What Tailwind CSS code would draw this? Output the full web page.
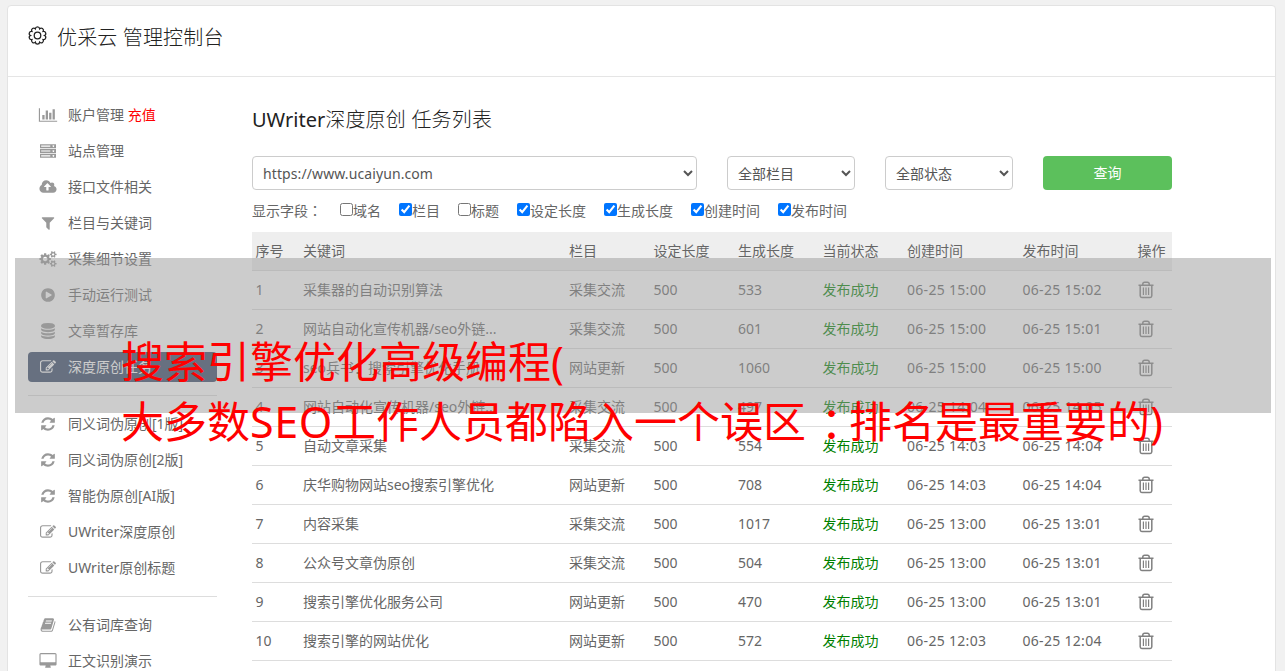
<!DOCTYPE html>
<html lang="zh-CN">
<head>
<meta charset="UTF-8">
<meta name="viewport" content="width=device-width, initial-scale=1.0">
<title>优采云 管理控制台</title>
<script src="https://cdn.jsdelivr.net/npm/@tailwindcss/browser@4"></script>
</head>
<body class="bg-[#f1f1f1] h-[671px] overflow-hidden font-['Noto_Sans','Noto_Sans_CJK_SC',sans-serif] text-sm text-[#666]">

<!-- icons -->
<svg class="hidden">
  <symbol id="chart" viewBox="0 0 2048 1792"><path d="M640 896v512h-256v-512h256zm384-512v1024h-256v-1024h256zm1024 1152v128h-2048v-1536h128v1408h1920zm-640-896v768h-256v-768h256zm384-384v1152h-256v-1152h256z"/></symbol>
  <symbol id="server" viewBox="0 0 1792 1792"><path fill-rule="evenodd" d="M0 128h1792v448h-1792zM128 288v128h1024v-128zM1500 256a96 96 0 1 0 1 0zM0 672h1792v448h-1792zM128 832v128h1024v-128zM1500 800a96 96 0 1 0 1 0zM0 1216h1792v448h-1792zM128 1376v128h1024v-128zM1500 1344a96 96 0 1 0 1 0z"/></symbol>
  <symbol id="cloud" viewBox="0 0 1920 1792"><path d="M1280 864q0-14-9-23l-352-352q-9-9-23-9t-23 9l-351 351q-10 12-10 24 0 14 9 23t23 9h224v352q0 13 9.5 22.5t22.5 9.5h192q13 0 22.5-9.5t9.5-22.5v-352h224q13 0 22.5-9.5t9.5-22.5zm640 288q0 159-112.5 271.5t-271.5 112.5h-1088q-185 0-316.5-131.5t-131.5-316.5q0-130 70-240t188-165q-2-30-2-43 0-212 150-362t362-150q156 0 285.5 87t188.5 231q71-62 166-62 106 0 181 75t75 181q0 76-41 138 130 31 213.5 135.5t83.5 238.5z"/></symbol>
  <symbol id="filter" viewBox="0 0 1792 1792"><path d="M1595 295q17 41-14 70l-493 493v742q0 42-39 59-13 5-25 5-27 0-45-19l-256-256q-19-19-19-45v-486l-493-493q-31-29-14-70 17-39 59-39h1280q42 0 59 39z"/></symbol>
  <symbol id="cogs" viewBox="0 0 1920 1792"><path d="M896 896q0-106-75-181t-181-75-181 75-75 181 75 181 181 75 181-75 75-181zm768 512q0-52-38-90t-90-38-90 38-38 90q0 53 37.5 90.5t90.5 37.5 90.5-37.5 37.5-90.5zm0-1024q0-52-38-90t-90-38-90 38-38 90q0 53 37.5 90.5t90.5 37.5 90.5-37.5 37.5-90.5zm-384 421v185q0 10-7 19.5t-16 10.5l-155 24q-11 35-32 76 34 48 90 115 7 11 7 20 0 12-7 19-23 30-82.5 89.5t-78.5 59.5q-11 0-21-7l-115-90q-37 19-77 31-11 108-23 155-7 24-30 24h-186q-11 0-20-7.5t-10-17.5l-23-153q-34-10-75-31l-118 89q-7 7-20 7-11 0-21-8-144-133-144-160 0-9 7-19 10-14 41-53t47-61q-23-44-35-82l-152-24q-10-1-17-9.5t-7-19.5v-185q0-10 7-19.5t16-10.5l155-24q11-35 32-76-34-48-90-115-7-11-7-20 0-12 7-20 22-30 82-89t79-59q11 0 21 7l115 90q34-18 77-32 11-108 23-154 7-24 30-24h186q11 0 20 7.5t10 17.5l23 153q34 10 75 31l118-89q8-7 20-7 11 0 21 8 144 133 144 160 0 8-7 19-12 16-42 54t-45 60q23 48 34 82l152 23q10 2 17 10.5t7 19.5zm640 533v140q0 16-149 31-12 27-30 52 51 113 51 138 0 4-4 7-122 71-124 71-8 0-46-47t-52-68q-20 2-30 2t-30-2q-14 21-52 68t-46 47q-2 0-124-71-4-3-4-7 0-25 51-138-18-25-30-52-149-15-149-31v-140q0-16 149-31 13-29 30-52-51-113-51-138 0-4 4-7 4-2 35-20t59-34 30-16q8 0 46 46.5t52 67.5q20-2 30-2t30 2q51-71 92-112l6-2q4 0 124 70 4 3 4 7 0 25-51 138 17 23 30 52 149 15 149 31zm0-1024v140q0 16-149 31-12 27-30 52 51 113 51 138 0 4-4 7-122 71-124 71-8 0-46-47t-52-68q-20 2-30 2t-30-2q-14 21-52 68t-46 47q-2 0-124-71-4-3-4-7 0-25 51-138-18-25-30-52-149-15-149-31v-140q0-16 149-31 13-29 30-52-51-113-51-138 0-4 4-7 4-2 35-20t59-34 30-16q8 0 46 46.5t52 67.5q20-2 30-2t30 2q51-71 92-112l6-2q4 0 124 70 4 3 4 7 0 25-51 138 17 23 30 52 149 15 149 31z"/></symbol>
  <symbol id="play" viewBox="0 0 1792 1792"><path d="M896 128q209 0 385.5 103t279.5 279.5 103 385.5-103 385.5-279.5 279.5-385.5 103-385.5-103-279.5-279.5-103-385.5 103-385.5 279.5-279.5 385.5-103zm384 823q32-18 32-55t-32-55l-544-320q-31-19-64-1-32 19-32 56v640q0 37 32 56 16 8 32 8 17 0 32-9z"/></symbol>
  <symbol id="database" viewBox="0 0 1792 1792"><path d="M896 768q237 0 443-43t325-127v170q0 69-103 128t-280 93.5-385 34.5-385-34.5-280-93.5-103-128v-170q119 84 325 127t443 43zm0 768q237 0 443-43t325-127v170q0 69-103 128t-280 93.5-385 34.5-385-34.5-280-93.5-103-128v-170q119 84 325 127t443 43zm0-384q237 0 443-43t325-127v170q0 69-103 128t-280 93.5-385 34.5-385-34.5-280-93.5-103-128v-170q119 84 325 127t443 43zm0-1152q208 0 385 34.5t280 93.5 103 128v128q0 69-103 128t-280 93.5-385 34.5-385-34.5-280-93.5-103-128v-128q0-69 103-128t280-93.5 385-34.5z"/></symbol>
  <symbol id="edit" viewBox="0 0 1792 1792"><path d="M888 1184l116-116-152-152-116 116v56h96v96h56zm440-720q-16-16-33 1l-350 350q-17 17-1 33t33-1l350-350q17-17 1-33zm80 594v190q0 119-84.5 203.5t-203.5 84.5h-832q-119 0-203.5-84.5t-84.5-203.5v-832q0-119 84.5-203.5t203.5-84.5h832q63 0 117 25 15 7 18 23 3 17-9 29l-49 49q-14 14-32 8-23-6-45-6h-832q-66 0-113 47t-47 113v832q0 66 47 113t113 47h832q66 0 113-47t47-113v-126q0-13 9-22l64-64q15-15 35-7t20 29zm-96-738l288 288-672 672h-288v-288zm444 132l-92 92-288-288 92-92q28-28 68-28t68 28l152 152q28 28 28 68t-28 68z"/></symbol>
  <symbol id="refresh" viewBox="0 0 1792 1792"><path d="M1639 1056q0 5-1 7-64 268-268 434.5t-478 166.5q-146 0-282.5-55t-243.5-157l-129 129q-19 19-45 19t-45-19-19-45v-448q0-26 19-45t45-19h448q26 0 45 19t19 45-19 45l-137 137q71 66 161 102t187 36q134 0 250-65t186-179q11-17 53-117 8-23 30-23h192q13 0 22.5 9.5t9.5 22.5zm25-800v448q0 26-19 45t-45 19h-448q-26 0-45-19t-19-45 19-45l138-138q-148-137-349-137-134 0-250 65t-186 179q-11 17-53 117-8 23-30 23h-199q-13 0-22.5-9.5t-9.5-22.5v-7q65-268 270-434.5t480-166.5q146 0 284 55.5t245 156.5l130-129q19-19 45-19t45 19 19 45z"/></symbol>
  <symbol id="book" viewBox="0 0 1792 1792"><path d="M1703 478q40 57 18 129l-275 906q-19 64-76.5 107.5t-122.5 43.5h-923q-77 0-148.5-53.5t-99.5-131.5q-24-67-2-127 0-4 3-27t4-37q1-8-3-21.5t-3-19.5q2-11 8-21t16.5-23.5 16.5-23.5q23-38 45-91.5t30-91.5q3-10 .5-30t-.5-28q3-11 17-28t17-23q21-36 42-92t25-90q1-9-2.5-32t.5-28q4-13 22-30.5t22-22.5q19-26 42.5-84.5t27.5-96.5q1-8-3-25.5t-2-26.5q2-8 9-18t18-23 17-21q8-12 16.5-30.5t15-35 16-36 19.5-32 26.5-23.5 36-11.5 47.5 5.5l-1 3q38-9 51-9h761q74 0 114 56t18 130l-274 906q-36 119-71.5 153.5t-128.5 34.5h-869q-27 0-38 15-11 16-1 43 24 70 144 70h923q29 0 56-15.5t35-41.5l300-987q7-22 5-57 38 15 59 43zm-1064 2q-4 13 2 22.5t20 9.5h608q13 0 25.5-9.5t16.5-22.5l21-64q4-13-2-22.5t-20-9.5h-608q-13 0-25.5 9.5t-16.5 22.5zm-83 256q-4 13 2 22.5t20 9.5h608q13 0 25.5-9.5t16.5-22.5l21-64q4-13-2-22.5t-20-9.5h-608q-13 0-25.5 9.5t-16.5 22.5z"/></symbol>
  <symbol id="desktop" viewBox="0 0 1920 1792"><path d="M1792 992v-832q0-13-9.5-22.5t-22.5-9.5h-1600q-13 0-22.5 9.5t-9.5 22.5v832q0 13 9.5 22.5t22.5 9.5h1600q13 0 22.5-9.5t9.5-22.5zm128-832v1088q0 66-47 113t-113 47h-544q0 37 16 77.5t32 71 16 43.5q0 26-19 45t-45 19h-512q-26 0-45-19t-19-45q0-14 16-44t32-70 16-78h-544q-66 0-113-47t-47-113v-1088q0-66 47-113t113-47h1600q66 0 113 47t47 113z"/></symbol>
  <symbol id="trash" viewBox="0 0 16 18"><path fill="none" stroke="currentColor" stroke-width="1.5" d="M.5 4.2h15M4.8 4V3a1.8 1.8 0 0 1 1.8-1.8h2.8A1.8 1.8 0 0 1 11.2 3v1M2.2 4.5v10.3a1.6 1.6 0 0 0 1.6 1.6h8.4a1.6 1.6 0 0 0 1.6-1.6V4.5"/><path fill="none" stroke="currentColor" stroke-width="1.2" d="M5.4 6.5v7.5M8 6.5v7.5M10.6 6.5v7.5"/></symbol>
</svg>

<div class="mt-[5px] ml-[7px] w-[1269px] h-[680px] bg-white border border-[#e3e3e3] rounded">
  <header class="h-[71px] border-b border-[#e5e5e5] flex items-start pl-5 pt-[17px] text-[#222]">
    <svg class="w-[19px] h-[19px] mt-[3px] mr-[10px] overflow-visible" viewBox="0 0 18 18" fill="none" stroke="currentColor" stroke-width="1.2"><path d="M15.6 9A2.05 2.05 0 0 1 14.34 12.88A2.05 2.05 0 0 1 11.04 15.28A2.05 2.05 0 0 1 6.96 15.28A2.05 2.05 0 0 1 3.66 12.88A2.05 2.05 0 0 1 2.4 9A2.05 2.05 0 0 1 3.66 5.12A2.05 2.05 0 0 1 6.96 2.72A2.05 2.05 0 0 1 11.04 2.72A2.05 2.05 0 0 1 14.34 5.12A2.05 2.05 0 0 1 15.6 9z"/><circle cx="9" cy="9" r="3.1"/></svg>
    <h1 class="text-xl leading-[30px] font-light tracking-[0.15px]">优采云 管理控制台</h1>
  </header>

  <div class="flex pl-5 pt-[23px]">
    <nav id="menu" class="w-[189px] shrink-0"></nav>

    <main class="w-[920px] ml-[35px] pt-[5px]">
      <h2 class="text-xl leading-[30px] text-[#222]">UWriter<span class="font-light tracking-[0.2px]">深度原创 任务列表</span></h2>
      <div class="flex gap-[30px] mt-[21px] text-[#555]">
        <select class="w-[445px] h-[34px] border border-[#ccc] rounded px-1.5 bg-white tracking-[0.1px]"><option>https://www.ucaiyun.com</option></select>
        <select class="w-[128px] h-[34px] border border-[#ccc] rounded px-1.5 bg-white"><option>全部栏目</option></select>
        <select class="w-[128px] h-[34px] border border-[#ccc] rounded px-1.5 bg-white"><option>全部状态</option></select>
        <button class="w-[129px] h-[34px] rounded bg-[#5cc05c] text-white">查询</button>
      </div>
      <div class="flex gap-[18px] mt-[11px] h-5 leading-5 whitespace-nowrap">
        <span class="w-[70px]">显示字段<span class="font-['Noto_Sans_CJK_TC'] leading-none" lang="zh-TW">：</span></span>
        <label class="flex"><input type="checkbox" class="size-[13px] mt-0.5">域名</label>
        <label class="flex"><input type="checkbox" class="size-[13px] mt-0.5" checked>栏目</label>
        <label class="flex"><input type="checkbox" class="size-[13px] mt-0.5">标题</label>
        <label class="flex"><input type="checkbox" class="size-[13px] mt-0.5" checked>设定长度</label>
        <label class="flex"><input type="checkbox" class="size-[13px] mt-0.5" checked>生成长度</label>
        <label class="flex"><input type="checkbox" class="size-[13px] mt-0.5" checked>创建时间</label>
        <label class="flex"><input type="checkbox" class="size-[13px] mt-0.5" checked>发布时间</label>
      </div>
      <table class="w-[920px] table-fixed mt-[11px] text-left whitespace-nowrap border-separate border-spacing-0">
        <thead>
          <tr class="h-[39px] bg-[#eee] [&>th]:font-normal [&>th]:pl-[3.5px] [&>th]:border-b [&>th]:border-[#ddd]">
            <th class="w-[47.5px]">序号</th>
            <th class="w-[266px]">关键词</th>
            <th class="w-[84.5px]">栏目</th>
            <th class="w-[84.5px]">设定长度</th>
            <th class="w-[84.5px]">生成长度</th>
            <th class="w-[84.5px]">当前状态</th>
            <th class="w-[115.5px]">创建时间</th>
            <th class="w-[115px]">发布时间</th>
            <th class="w-[38px]">操作</th>
          </tr>
        </thead>
        <tbody id="tasks"></tbody>
      </table>
    </main>
  </div>
</div>

<!-- banner over the page -->
<div class="absolute left-[15px] top-[258px] w-[1256px] h-[155px] bg-[#999]/50"></div>
<div class="absolute left-[121px] top-[332px] text-[43px] leading-[60px] text-[#f00] whitespace-nowrap">
  <p class="h-[60px]">搜索引擎优化高级编程(</p>
  <p class="h-[60px]">大多数<span class="tracking-[0.6px]">SEO</span>工作人员都陷入一个误区<span class="font-['Noto_Sans_CJK_TC'] leading-none relative left-1 top-[3px]" lang="zh-TW">：</span>排名是最重要的)</p>
</div>

<script>
  const menu = [
    ['chart', '账户管理 <span class="text-[#f00]">充值</span>'],
    ['server', '站点管理'],
    ['cloud', '接口文件相关'],
    ['filter', '栏目与关键词'],
    ['cogs', '采集细节设置'],
    ['play', '手动运行测试'],
    ['database', '文章暂存库'],
    ['edit', '深度原创任务', true],
    null,
    ['refresh', '同义词伪原创[1版]'],
    ['refresh', '同义词伪原创[2版]'],
    ['refresh', '智能伪原创[AI版]'],
    ['edit', 'UWriter深度原创'],
    ['edit', 'UWriter原创标题'],
    null,
    ['book', '公有词库查询'],
    ['desktop', '正文识别演示']
  ];

  const tasks = [
    ['采集器的自动识别算法', '采集交流', 533, '15:00', '15:02'],
    ['网站自动化宣传机器/seo外链...', '采集交流', 601, '15:00', '15:01'],
    ['seo兵书：搜索引擎优化手册', '网站更新', 1060, '15:00', '15:00'],
    ['网站自动化宣传机器/seo外链...', '采集交流', 497, '14:04', '14:05'],
    ['自动文章采集', '采集交流', 554, '14:03', '14:04'],
    ['庆华购物网站seo搜索引擎优化', '网站更新', 708, '14:03', '14:04'],
    ['内容采集', '采集交流', 1017, '13:00', '13:01'],
    ['公众号文章伪原创', '采集交流', 504, '13:00', '13:01'],
    ['搜索引擎优化服务公司', '网站更新', 470, '13:00', '13:01'],
    ['搜索引擎的网站优化', '网站更新', 572, '12:03', '12:04']
  ];

  document.getElementById('menu').innerHTML = menu.map(item => {
    if (!item) return '<hr class="border-[#ddd] mt-[13px] mb-[13px]">';
    const [icon, text, active] = item;
    return `<a class="flex items-center h-[30px] pl-[10px] rounded whitespace-nowrap [&+a]:mt-1.5 ${active ? 'bg-[#354766] text-white' : ''}">
      <svg class="w-5 h-4 mr-[10px] ${active ? 'text-white' : 'text-[#999]'}" fill="currentColor"><use href="#${icon}"/></svg><span>${text}</span></a>`;
  }).join('');

  document.getElementById('tasks').innerHTML = tasks.map((t, i) => `
    <tr class="h-[39px] [&>td]:pl-[3.5px] [&>td]:border-b [&>td]:border-[#ddd]">
      <td>${i + 1}</td><td>${t[0]}</td><td>${t[1]}</td><td>500</td><td>${t[2]}</td>
      <td class="text-[#008000]">发布成功</td>
      <td class="tracking-[0.3px]">06-25 ${t[3]}</td><td class="tracking-[0.3px]">06-25 ${t[4]}</td>
      <td><svg class="w-4 h-[18px] text-[#808080]"><use href="#trash"/></svg></td>
    </tr>`).join('');
</script>
</body>
</html>
